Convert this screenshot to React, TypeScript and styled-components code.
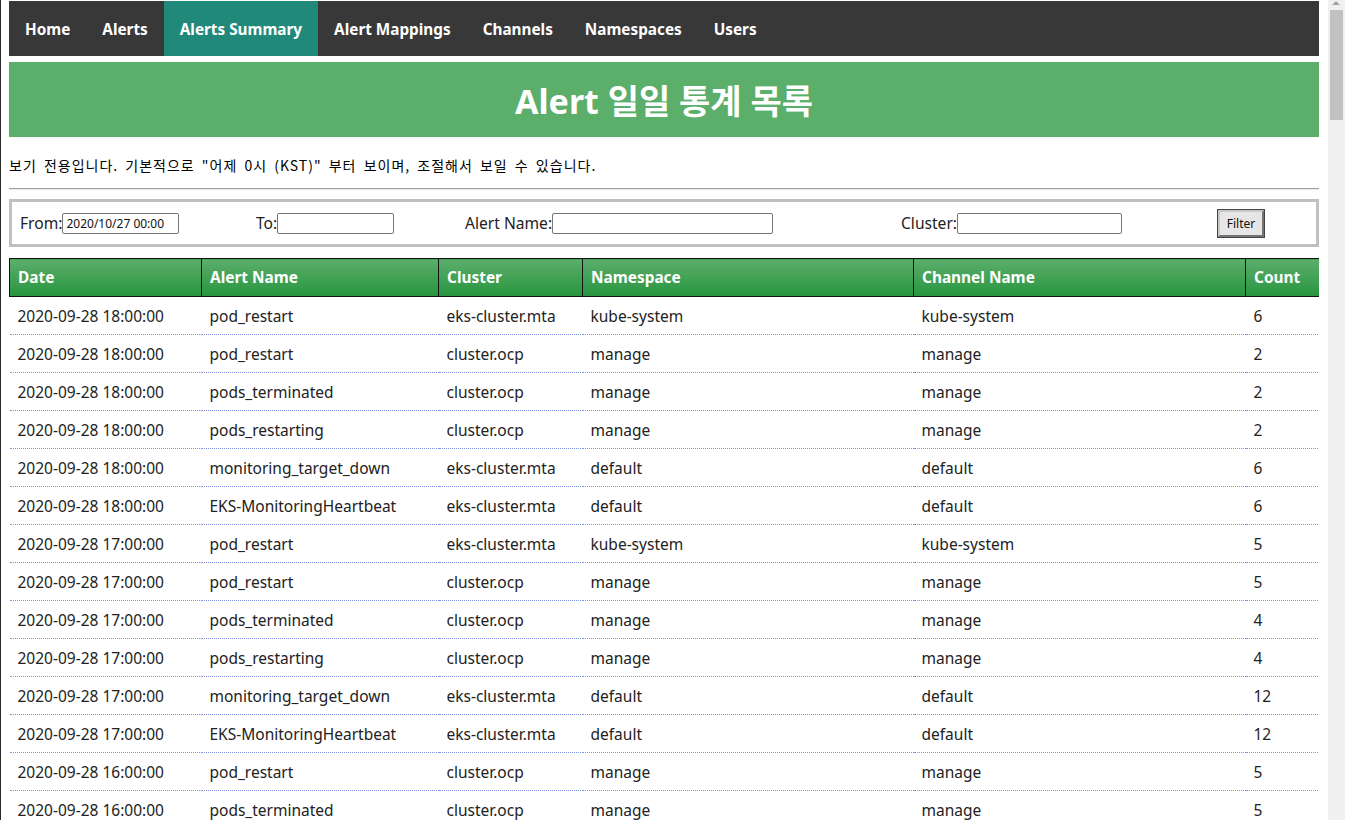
import styled, { createGlobalStyle } from 'styled-components';

const GlobalStyle = createGlobalStyle`
  html {
    border-left: 1px solid #2b2b2b;
  }
  body {
    margin: 1px 26px 8px 8px;
    font-family: "Noto Sans", "Noto Sans CJK KR", sans-serif;
    background: #fff;
    color: #222;
  }
`;

const ScrollTrack = styled.div`
  position: fixed;
  top: 0;
  right: 0;
  bottom: 0;
  width: 17px;
  background: #f0f0f0;
`;

const ScrollArrow = styled.div`
  position: absolute;
  top: 1px;
  left: 4px;
  width: 0;
  height: 0;
  border-left: 4px solid transparent;
  border-right: 4px solid transparent;
  border-bottom: 4px solid #a3a3a3;
`;

const ScrollThumb = styled.div`
  position: absolute;
  top: 10px;
  left: 2px;
  width: 13px;
  height: 110px;
  background: #c1c1c1;
`;

const Nav = styled.nav`
  display: flex;
  height: 55px;
  background-color: #383838;
`;

const NavItem = styled.a<{ active?: boolean }>`
  display: flex;
  align-items: center;
  padding: 0 16px;
  color: #fff;
  font-weight: bold;
  font-size: 15.3px;
  text-decoration: none;
  background-color: ${props => (props.active ? '#21897a' : 'transparent')};
`;

const Banner = styled.header`
  margin-top: 6px;
  height: 75px;
  background-color: #5cae6b;
  display: flex;
  align-items: center;
  justify-content: center;
`;

const Title = styled.h1`
  margin: 0;
  color: #fff;
  font-size: 34px;
  font-weight: bold;
  font-family: "Noto Sans", "Noto Sans CJK KR", sans-serif;
`;

const Notice = styled.p`
  margin: 18px 0 0;
  font-size: 14px;
  line-height: 20px;
  letter-spacing: 1px;
  word-spacing: 3px;
  font-family: "Noto Sans CJK KR", sans-serif;
  color: #000;
`;

const Rule = styled.hr`
  margin: 13px 0 9px;
  border: none;
  border-top: 1px solid #a0a0a0;
  border-bottom: 1px solid #e8e8e8;
`;

const FilterBox = styled.form`
  display: flex;
  align-items: center;
  height: 42px;
  border: 3px solid #c0c0c0;
  padding: 0 8px;
`;

const Field = styled.label<{ width: number }>`
  display: flex;
  align-items: center;
  width: ${props => props.width}px;
  font-size: 15.6px;
  color: #222;
`;

const TextInput = styled.input<{ width: number }>`
  width: ${props => props.width}px;
  height: 21px;
  box-sizing: border-box;
  border: 1px solid #767676;
  border-radius: 2px;
  padding: 0 3px;
  font-size: 12px;
  font-family: "Noto Sans", sans-serif;
  color: #111;
`;

const FilterButton = styled.button`
  margin-left: 6px;
  width: 46px;
  height: 27px;
  padding: 0;
  font-size: 12px;
  font-family: "Noto Sans", sans-serif;
  background: #e6e6e6;
  border: 2px outset #c8c8c8;
  outline: 1px solid #444;
  color: #111;
`;

const Table = styled.table`
  margin-top: 11px;
  width: 100%;
  border-collapse: collapse;
  table-layout: fixed;
`;

const HeadCell = styled.th<{ width: number }>`
  box-sizing: border-box;
  width: ${props => props.width}px;
  height: 38px;
  padding: 0 8px;
  text-align: left;
  color: #fff;
  font-size: 15.4px;
  font-weight: bold;
  border: 1px solid #111;
  background: linear-gradient(to bottom, #5cae6b, #27953f);
`;

const Row = styled.tr`
  border-bottom: 1px dotted #7f92e6;
`;

const Cell = styled.td`
  height: 37px;
  padding: 0 8px;
  font-size: 15.5px;
  color: #222;
  white-space: nowrap;
`;

const navItems = ['Home', 'Alerts', 'Alerts Summary', 'Alert Mappings', 'Channels', 'Namespaces', 'Users'];

const columns: [string, number][] = [
  ['Date', 192],
  ['Alert Name', 237],
  ['Cluster', 144],
  ['Namespace', 331],
  ['Channel Name', 332],
  ['Count', 74],
];

const rows: [string, string, string, string, string, number][] = [
  ['2020-09-28 18:00:00', 'pod_restart', 'eks-cluster.mta', 'kube-system', 'kube-system', 6],
  ['2020-09-28 18:00:00', 'pod_restart', 'cluster.ocp', 'manage', 'manage', 2],
  ['2020-09-28 18:00:00', 'pods_terminated', 'cluster.ocp', 'manage', 'manage', 2],
  ['2020-09-28 18:00:00', 'pods_restarting', 'cluster.ocp', 'manage', 'manage', 2],
  ['2020-09-28 18:00:00', 'monitoring_target_down', 'eks-cluster.mta', 'default', 'default', 6],
  ['2020-09-28 18:00:00', 'EKS-MonitoringHeartbeat', 'eks-cluster.mta', 'default', 'default', 6],
  ['2020-09-28 17:00:00', 'pod_restart', 'eks-cluster.mta', 'kube-system', 'kube-system', 5],
  ['2020-09-28 17:00:00', 'pod_restart', 'cluster.ocp', 'manage', 'manage', 5],
  ['2020-09-28 17:00:00', 'pods_terminated', 'cluster.ocp', 'manage', 'manage', 4],
  ['2020-09-28 17:00:00', 'pods_restarting', 'cluster.ocp', 'manage', 'manage', 4],
  ['2020-09-28 17:00:00', 'monitoring_target_down', 'eks-cluster.mta', 'default', 'default', 12],
  ['2020-09-28 17:00:00', 'EKS-MonitoringHeartbeat', 'eks-cluster.mta', 'default', 'default', 12],
  ['2020-09-28 16:00:00', 'pod_restart', 'cluster.ocp', 'manage', 'manage', 5],
  ['2020-09-28 16:00:00', 'pods_terminated', 'cluster.ocp', 'manage', 'manage', 5],
  ['2020-09-28 16:00:00', 'pods_restarting', 'cluster.ocp', 'manage', 'manage', 5],
  ['2020-09-28 16:00:00', 'monitoring_target_down', 'eks-cluster.mta', 'default', 'default', 12],
  ['2020-09-28 16:00:00', 'EKS-MonitoringHeartbeat', 'eks-cluster.mta', 'default', 'default', 12],
  ['2020-09-28 15:00:00', 'pod_restart', 'eks-cluster.mta', 'kube-system', 'kube-system', 4],
  ['2020-09-28 15:00:00', 'pod_restart', 'cluster.ocp', 'manage', 'manage', 3],
];

export default function App() {
  return (
    <>
      <GlobalStyle />
      <Nav>
        {navItems.map(item => (
          <NavItem key={item} active={item === 'Alerts Summary'} href="#">
            {item}
          </NavItem>
        ))}
      </Nav>
      <Banner>
        <Title>Alert 일일 통계 목록</Title>
      </Banner>
      <Notice>보기 전용입니다. 기본적으로 "어제 0시 (KST)" 부터 보이며, 조절해서 보일 수 있습니다.</Notice>
      <Rule />
      <FilterBox onSubmit={e => e.preventDefault()}>
        <Field width={236}>
          From:<TextInput width={117} defaultValue="2020/10/27 00:00" />
        </Field>
        <Field width={209}>
          To:<TextInput width={117} />
        </Field>
        <Field width={436}>
          Alert Name:<TextInput width={221} />
        </Field>
        <Field width={311}>
          Cluster:<TextInput width={165} />
        </Field>
        <FilterButton type="submit">Filter</FilterButton>
      </FilterBox>
      <Table>
        <thead>
          <tr>
            {columns.map(([name, width]) => (
              <HeadCell key={name} width={width}>
                {name}
              </HeadCell>
            ))}
          </tr>
        </thead>
        <tbody>
          {rows.map((r, i) => (
            <Row key={i}>
              {r.map((v, j) => (
                <Cell key={j}>{v}</Cell>
              ))}
            </Row>
          ))}
        </tbody>
      </Table>
      <ScrollTrack>
        <ScrollArrow />
        <ScrollThumb />
      </ScrollTrack>
    </>
  );
}
